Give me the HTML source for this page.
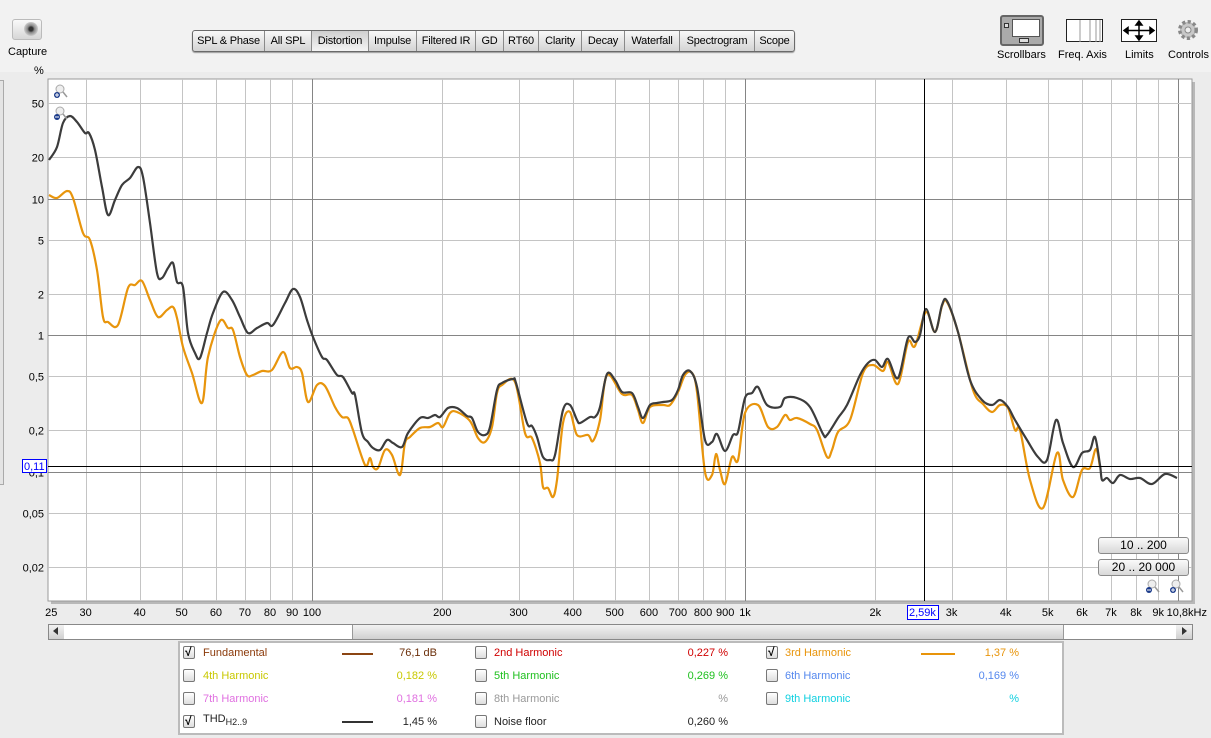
<!DOCTYPE html>
<html><head><meta charset="utf-8">
<style>
*{margin:0;padding:0;box-sizing:border-box}
body{width:1211px;height:738px;overflow:hidden;background:#ececec;font-family:"Liberation Sans",sans-serif;font-size:11px;color:#000;position:relative}
.a{position:absolute}
.tb{position:absolute;top:30px;left:192px;height:22px;display:flex;border:1px solid #6a6a6a;border-radius:3px;background:linear-gradient(#f8f8f8,#d4d4d4);box-shadow:0 1px 1px #999}
.tb div{height:20px;line-height:20px;text-align:center;border-right:1px solid #8a8a8a;font-size:11px;letter-spacing:-0.2px}
.tb div:last-child{border-right:none}
.tb .on{background:linear-gradient(#cfcfcf,#f4f4f4);}
.btn{position:absolute;left:1098px;width:91px;height:17px;border:1px solid #8a8a8a;border-radius:3px;background:linear-gradient(#fafafa,#d8d8d8);text-align:center;line-height:15px;font-size:12px}
.cb{position:absolute;width:12px;height:13px;border:1px solid #777;border-radius:2px;background:linear-gradient(#fff,#ddd)}
.cb.c::after{content:"\221A";position:absolute;left:1px;top:-2px;font-size:12px;font-weight:bold}
.lg{position:absolute;font-size:11px;white-space:nowrap}
.r{text-align:right}
</style></head><body>
<div class="a" style="left:0;top:0;width:1211px;height:72px;background:#f2f2f2"></div>
<div class="a" style="left:12px;top:19px;width:30px;height:21px;border:1px solid #bbb;border-radius:3px;background:linear-gradient(#fafafa,#d6d6d6)"></div>
<div class="a" style="left:24px;top:22px;width:14px;height:14px;border-radius:50%;background:radial-gradient(#333 20%,#888 35%,#ccc 70%)"></div>
<div class="a" style="left:8px;top:46px;font-size:11px">Capture</div>
<div class="a" style="left:34px;top:65px;font-size:11px">%</div>

<div class="tb">
<div style="width:72px">SPL &amp; Phase</div><div style="width:47px">All SPL</div><div class="on" style="width:57px">Distortion</div><div style="width:48px">Impulse</div><div style="width:59px">Filtered IR</div><div style="width:28px">GD</div><div style="width:35px">RT60</div><div style="width:43px">Clarity</div><div style="width:43px">Decay</div><div style="width:55px">Waterfall</div><div style="width:75px">Spectrogram</div><div style="width:39px">Scope</div>
</div>

<div class="a" style="left:1000px;top:15px;width:44px;height:31px;border:2px solid #666;border-radius:3px;background:#aaa"></div>
<div class="a" style="left:1012px;top:19px;width:28px;height:18px;background:#fff;border:1px solid #555"></div>
<div class="a" style="left:1004px;top:23px;width:5px;height:5px;border:1px solid #333;background:#ddd"></div>
<div class="a" style="left:1019px;top:38px;width:10px;height:5px;border:1px solid #333;background:#ddd"></div>
<div class="a" style="left:997px;top:49px">Scrollbars</div>
<svg class="a" style="left:1066px;top:19px" width="38" height="24"><rect x="0.5" y="0.5" width="36" height="22" fill="#fff" stroke="#222"/><line x1="14" y1="1" x2="14" y2="23" stroke="#999"/><line x1="24" y1="1" x2="24" y2="23" stroke="#999"/><line x1="30" y1="1" x2="30" y2="23" stroke="#999"/><line x1="34" y1="1" x2="34" y2="23" stroke="#999"/></svg>
<div class="a" style="left:1058px;top:49px">Freq. Axis</div>
<svg class="a" style="left:1121px;top:19px" width="37" height="24"><rect x="0.5" y="0.5" width="35" height="22" fill="#fff" stroke="#222"/><path d="M3 11.5H33M18 2V21M3 11.5l4-3v6zM33 11.5l-4-3v6zM18 2l-3 4h6zM18 21l-3-4h6z" stroke="#000" stroke-width="1.5" fill="#000"/></svg>
<div class="a" style="left:1125px;top:49px">Limits</div>
<svg class="a" style="left:1177px;top:19px" width="22" height="22"><circle cx="11" cy="11" r="8" fill="#bbb" stroke="#888" stroke-width="4" stroke-dasharray="3 2.3"/><circle cx="11" cy="11" r="6.5" fill="#c8c8c8"/><circle cx="11" cy="11" r="3" fill="#eee" stroke="#888"/></svg>
<div class="a" style="left:1168px;top:49px">Controls</div>

<div class="a" style="left:0;top:80px;width:4px;height:405px;border:1px solid #aaa;border-left:none;background:#e4e4e4"></div>

<svg class="a" id="plot" style="left:0;top:0" width="1211" height="640"></svg>

<div class="a" style="left:48px;top:624px;width:1145px;height:16px;border:1px solid #888;background:linear-gradient(#f2f2f2,#d0d0d0)"></div>
<div class="a" style="left:64px;top:625px;width:289px;height:14px;background:#fff;border-right:1px solid #999"></div>
<div class="a" style="left:1063px;top:625px;width:113px;height:14px;background:#fff;border-left:1px solid #999"></div>
<div class="a" style="left:53px;top:627px;width:0;height:0;border-top:4px solid transparent;border-bottom:4px solid transparent;border-right:5px solid #333"></div>
<div class="a" style="left:1182px;top:627px;width:0;height:0;border-top:4px solid transparent;border-bottom:4px solid transparent;border-left:5px solid #333"></div>

<div class="a" style="left:178px;top:641px;width:886px;height:94px;border:2px solid #bbb;background:#fff"></div>
<div class="cb c" style="left:183px;top:646px"></div><div class="lg" style="left:203px;top:647px;color:#8b3a0a">Fundamental</div>
<div class="a" style="left:342px;top:653px;width:31px;height:2px;background:#8b4513"></div><div class="lg r" style="left:380px;width:57px;top:647px;color:#6b2f0a">76,1 dB</div>
<div class="cb" style="left:475px;top:646px"></div><div class="lg" style="left:494px;top:647px;color:#d00000">2nd Harmonic</div><div class="lg r" style="left:660px;width:68px;top:647px;color:#d00000">0,227 %</div>
<div class="cb c" style="left:766px;top:646px"></div><div class="lg" style="left:785px;top:647px;color:#e8940a">3rd Harmonic</div>
<div class="a" style="left:921px;top:653px;width:34px;height:2px;background:#e8940a"></div><div class="lg r" style="left:960px;width:59px;top:647px;color:#e8940a">1,37 %</div>

<div class="cb" style="left:183px;top:669px"></div><div class="lg" style="left:203px;top:670px;color:#c8c800">4th Harmonic</div><div class="lg r" style="left:380px;width:57px;top:670px;color:#c8c800">0,182 %</div>
<div class="cb" style="left:475px;top:669px"></div><div class="lg" style="left:494px;top:670px;color:#20c020">5th Harmonic</div><div class="lg r" style="left:660px;width:68px;top:670px;color:#20c020">0,269 %</div>
<div class="cb" style="left:766px;top:669px"></div><div class="lg" style="left:785px;top:670px;color:#5588ee">6th Harmonic</div><div class="lg r" style="left:960px;width:59px;top:670px;color:#5588ee">0,169 %</div>

<div class="cb" style="left:183px;top:692px"></div><div class="lg" style="left:203px;top:693px;color:#e070e0">7th Harmonic</div><div class="lg r" style="left:380px;width:57px;top:693px;color:#e070e0">0,181 %</div>
<div class="cb" style="left:475px;top:692px"></div><div class="lg" style="left:494px;top:693px;color:#999">8th Harmonic</div><div class="lg r" style="left:660px;width:68px;top:693px;color:#999">%</div>
<div class="cb" style="left:766px;top:692px"></div><div class="lg" style="left:785px;top:693px;color:#10d0e0">9th Harmonic</div><div class="lg r" style="left:960px;width:59px;top:693px;color:#10d0e0">%</div>

<div class="cb c" style="left:183px;top:715px"></div><div class="lg" style="left:203px;top:713px;color:#222">THD<sub style="font-size:9px">H2..9</sub></div>
<div class="a" style="left:342px;top:721px;width:31px;height:2px;background:#333"></div><div class="lg r" style="left:380px;width:57px;top:716px;color:#222">1,45 %</div>
<div class="cb" style="left:475px;top:715px"></div><div class="lg" style="left:494px;top:716px;color:#222">Noise floor</div><div class="lg r" style="left:660px;width:68px;top:716px;color:#222">0,260 %</div>

<div class="btn" style="top:537px">10 .. 200</div>
<div class="btn" style="top:559px">20 .. 20 000</div>

<script>
const S=document.getElementById('plot');const NS='http://www.w3.org/2000/svg';
function el(t,a,txt){const e=document.createElementNS(NS,t);for(const k in a)e.setAttribute(k,a[k]);if(txt!=null)e.textContent=txt;S.appendChild(e);return e}
const L=48,T=79,R=1192,B=601;
const X=f=>312+433*Math.log10(f/100), Y=v=>335-136.5*Math.log10(v);
el('rect',{x:L+3,y:T+3,width:R-L,height:B-T,fill:'#b8b8b8'});
el('rect',{x:L,y:T,width:R-L,height:B-T,fill:'#fff',stroke:'#9a9a9a'});
const fs=[30,40,50,60,70,80,90,100,200,300,400,500,600,700,800,900,1000,2000,3000,4000,5000,6000,7000,8000,9000,10000];
fs.forEach(f=>{const x=Math.round(X(f))+.5;const maj=[100,1000,10000].includes(f);el('line',{x1:x,y1:T,x2:x,y2:B,stroke:maj?'#858585':'#c4c4c4'})});
const vs=[50,20,10,5,2,1,.5,.2,.1,.05,.02];
vs.forEach(v=>{const y=Math.round(Y(v))+.5;const maj=[10,1,.1].includes(v);el('line',{x1:L,y1:y,x2:R,y2:y,stroke:maj?'#858585':'#c4c4c4'});
 el('text',{x:44,y:y+4,'text-anchor':'end','font-size':11,'font-family':'Liberation Sans'},String(v).replace('.',','))});
[[25,'25'],[30,'30'],[40,'40'],[50,'50'],[60,'60'],[70,'70'],[80,'80'],[90,'90'],[100,'100'],[200,'200'],[300,'300'],[400,'400'],[500,'500'],[600,'600'],[700,'700'],[800,'800'],[900,'900'],[1000,'1k'],[2000,'2k'],[3000,'3k'],[4000,'4k'],[5000,'5k'],[6000,'6k'],[7000,'7k'],[8000,'8k'],[9000,'9k']].forEach(([f,t])=>{el('text',{x:X(f),y:616,'text-anchor':'middle','font-size':11,'font-family':'Liberation Sans'},t)});
el('text',{x:1207,y:616,'text-anchor':'end','font-size':11,'font-family':'Liberation Sans'},'10,8kHz');
const dark="49,160 57,147 63,123 70,116 77,122 85,133 89,133 95,150 102,187 108,215 115,200 122,185 130,178 138,167 143,177 150,223 157,273 162,278 168,268 173,263 177,282 183,287 188,333 195,353 200,358 207,333 213,313 223,292 232,300 240,317 248,333 257,328 267,323 273,325 285,303 293,289 300,297 307,320 313,337 322,357 327,360 337,375 343,377 352,393 355,395 362,433 368,442 373,448 380,450 387,440 393,443 402,447 408,433 420,418 428,418 435,415 440,417 448,408 457,408 467,416 472,418 478,432 485,435 490,427 497,390 502,383 513,379 516,383 527,423 532,426 537,437 543,457 550,460 555,455 563,410 570,405 577,420 580,423 590,417 595,417 600,407 607,374 615,380 622,392 632,393 638,407 643,418 650,405 657,403 663,402 672,400 678,390 683,375 690,371 697,387 705,440 712,442 717,434 725,451 733,435 738,432 745,398 752,393 758,387 767,405 780,407 785,398 797,398 810,407 823,434 827,435 838,418 847,405 860,375 868,363 875,360 882,367 888,359 898,378 908,338 915,342 920,335 926,309 935,332 942,305 947,301 958,332 970,380 982,400 992,405 1000,400 1008,407 1015,420 1027,440 1038,457 1047,460 1056,420 1063,443 1073,467 1082,453 1090,450 1095,437 1100,465 1102,480 1107,478 1113,483 1120,475 1130,479 1140,478 1152,484 1165,474 1177,478";
const org="49,195 57,198 67,191 73,198 83,233 90,240 97,270 103,317 108,322 118,325 128,288 135,285 142,281 150,300 158,317 167,310 173,307 177,318 183,347 192,373 202,403 208,357 220,321 228,328 233,330 240,357 247,375 253,375 262,371 272,370 283,352 290,368 297,367 302,373 308,402 317,385 325,386 335,407 342,417 348,418 353,430 365,465 370,458 373,467 378,468 385,450 392,455 400,475 405,443 410,437 420,428 430,427 438,423 443,427 450,413 457,412 470,421 478,438 485,442 492,427 497,393 502,385 515,382 525,433 532,438 540,463 543,487 548,488 553,497 557,480 563,423 570,412 577,435 588,435 593,441 600,420 607,375 622,394 632,395 638,410 643,423 650,407 663,405 670,405 678,392 685,375 692,373 697,392 705,472 712,475 716,454 720,470 725,484 732,457 738,460 745,413 758,405 768,427 777,427 785,415 790,420 797,418 810,424 817,430 827,457 832,450 838,432 850,420 863,373 873,365 883,371 888,362 898,384 908,342 915,346 926,312 935,332 942,306 947,302 958,332 973,390 983,404 992,412 1000,405 1008,408 1015,430 1020,430 1030,480 1043,508 1057,453 1063,480 1073,497 1082,470 1090,468 1096,449 1100,467";
function smooth(s){const p=s.split(' ').map(q=>q.split(',').map(Number));let d='M'+p[0][0]+' '+p[0][1];
for(let i=0;i<p.length-1;i++){const p0=p[i-1]||p[i],p1=p[i],p2=p[i+1],p3=p[i+2]||p2;
const c1x=p1[0]+(p2[0]-p0[0])/6,c1y=p1[1]+(p2[1]-p0[1])/6,c2x=p2[0]-(p3[0]-p1[0])/6,c2y=p2[1]-(p3[1]-p1[1])/6;
d+=` C${c1x.toFixed(1)} ${c1y.toFixed(1)} ${c2x.toFixed(1)} ${c2y.toFixed(1)} ${p2[0]} ${p2[1]}`}return d}
el('path',{d:smooth(org),fill:'none',stroke:'#e8950c','stroke-width':2.2,'stroke-linejoin':'round'});
el('path',{d:smooth(dark),fill:'none',stroke:'#3c3c3c','stroke-width':2.2,'stroke-linejoin':'round'});
el('line',{x1:L,y1:466.5,x2:R,y2:466.5,stroke:'#000'});
el('line',{x1:924.5,y1:T,x2:924.5,y2:B,stroke:'#000'});
el('rect',{x:22.5,y:459.5,width:24,height:13,fill:'#fff',stroke:'#0000ff'});
el('text',{x:24,y:470,'font-size':11,fill:'#0000ff','font-family':'Liberation Sans'},'0,11');
el('rect',{x:907.5,y:605.5,width:31,height:14,fill:'#fff',stroke:'#0000ff'});
el('text',{x:909,y:616,'font-size':11,fill:'#0000ff','font-family':'Liberation Sans'},'2,59k');
function mag(x,y,minus){el('circle',{cx:x+4,cy:y+4,r:4,fill:'#eee',stroke:'#aaa'});el('line',{x1:x+7,y1:y+7,x2:x+11,y2:y+12,stroke:'#999','stroke-width':1.5});el('circle',{cx:x+1,cy:y+10,r:3,fill:'#1a3a8a'});el('line',{x1:x-1,y1:y+10,x2:x+3,y2:y+10,stroke:'#fff'});if(!minus)el('line',{x1:x+1,y1:y+8,x2:x+1,y2:y+12,stroke:'#fff'})}
mag(56,85,false);mag(56,107,true);mag(1148,580,true);mag(1172,580,false);
</script>
</body></html>
